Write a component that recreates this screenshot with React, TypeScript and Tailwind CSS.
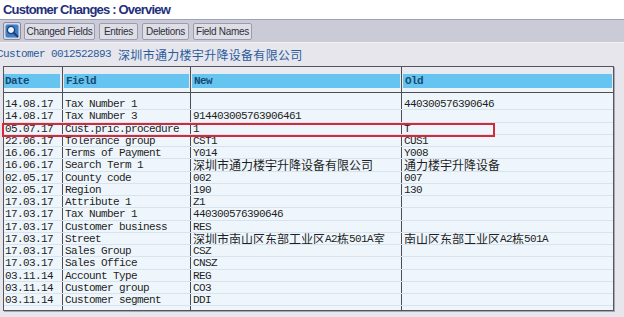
const rows: [string, string, string, string][] = [
  ["14.08.17", "Tax Number 1", "", "440300576390646"],
  ["14.08.17", "Tax Number 3", "914403005763906461", ""],
  ["05.07.17", "Cust.pric.procedure", "1", "T"],
  ["22.06.17", "Tolerance group", "CST1", "CUS1"],
  ["16.06.17", "Terms of Payment", "Y014", "Y008"],
  ["16.06.17", "Search Term 1", "深圳市通力楼宇升降设备有限公司", "通力楼宇升降设备"],
  ["02.05.17", "County code", "002", "007"],
  ["02.05.17", "Region", "190", "130"],
  ["17.03.17", "Attribute 1", "Z1", ""],
  ["17.03.17", "Tax Number 1", "440300576390646", ""],
  ["17.03.17", "Customer business", "RES", ""],
  ["17.03.17", "Street", "深圳市南山区东部工业区A2栋501A室", "南山区东部工业区A2栋501A"],
  ["17.03.17", "Sales Group", "CSZ", ""],
  ["17.03.17", "Sales Office", "CNSZ", ""],
  ["03.11.14", "Account Type", "REG", ""],
  ["03.11.14", "Customer group", "CO3", ""],
  ["03.11.14", "Customer segment", "DDI", ""],
];

// CJK runs are full width (12px), latin runs stay half width
function Mixed({ text }: { text: string }) {
  const parts = text.split(/([\u3400-\u9fff]+)/);
  return (
    <>
      {parts.map((p, i) =>
        /[\u3400-\u9fff]/.test(p) ? (
          <span
            key={i}
            className="inline-block h-[12px] align-top font-['Noto_Sans_CJK_SC',sans-serif] text-[12px] leading-[12px] tracking-normal"
          >
            {p}
          </span>
        ) : (
          <span key={i} className="whitespace-pre">{p}</span>
        )
      )}
    </>
  );
}

function Cells({ className, children }: { className?: string; children?: React.ReactNode[] }) {
  const kids = children ?? [null, null, null, null];
  return (
    <div className={`grid grid-cols-[59px_128px_211px_1fr] ${className ?? ""}`}>
      {kids.map((c, i) => (
        <div key={i} className={`h-full overflow-hidden whitespace-nowrap ${i < 3 ? "border-r border-[#4d4d55]" : ""}`}>
          {c}
        </div>
      ))}
    </div>
  );
}

function ToolButton({ label, w }: { label: string; w: string }) {
  return (
    <div
      className={`flex h-[17px] ${w} items-center justify-center rounded-[2px] border border-[#9c9cae] bg-[#dedee6] font-['Liberation_Sans',sans-serif] text-[10px] tracking-[-0.3px] text-[#30303c]`}
    >
      {label}
    </div>
  );
}

export default function App() {
  return (
    <div className="h-[317px] w-[624px] overflow-hidden bg-[#e6e6ec]">
      <div className="flex h-[19px] items-center bg-white pl-[3px] font-['Liberation_Sans',sans-serif] text-[13px] font-bold tracking-[-0.8px] text-[#232f7c]">
        Customer Changes : Overview
      </div>

      <div className="flex h-[24px] items-center gap-[4px] border-t border-b border-t-[#9aa3bb] border-b-[#f3f3f7] bg-[#cbcbd8] pl-[3px]">
        <div className="mr-[-1px] flex h-[18px] w-[18px] items-center justify-center rounded-[2px] border border-[#8a8aa0] bg-[#d8d8e2]">
          <svg width="14" height="14" viewBox="0 0 14 14">
            <rect x="0.5" y="0.5" width="13" height="13" rx="2" fill="#3f7fc8" />
            <circle cx="6" cy="6" r="3.6" fill="#e8f2ff" stroke="#1a3e78" strokeWidth="1.3" />
            <path d="M8.6 8.6 L12.5 12.5" stroke="#1a3e78" strokeWidth="2" strokeLinecap="round" />
          </svg>
        </div>
        <ToolButton label="Changed Fields" w="w-[71px]" />
        <ToolButton label="Entries" w="w-[39px]" />
        <ToolButton label="Deletions" w="w-[47px]" />
        <ToolButton label="Field Names" w="w-[59px]" />
      </div>

      <div className="-ml-[3px] flex h-[23px] items-center whitespace-pre font-['Liberation_Mono',monospace] text-[11px] tracking-[-0.6px] text-[#2a5c9c]">
        <span>Customer 0012522893 </span>
        <span className="ml-[1px] font-['Noto_Sans_CJK_SC',sans-serif] text-[12px] tracking-[0.3px]">
          深圳市通力楼宇升降设备有限公司
        </span>
      </div>

      <div className="ml-[3px] w-[611px] border border-[#55555d] font-['Liberation_Mono',monospace] text-[11px] tracking-[-0.6px] text-[#1e1e24] shadow-[1px_1px_0_#a8a8b4]">
        <Cells className="h-[7px] bg-[#e9eaf0]" />
        <Cells className="h-[14px] bg-[#e9eaf0]">
          {["Date", "Field", "New", "Old"].map((h, i) => (
            <div
              key={h}
              className={`flex h-full items-center bg-[#66c5f0] font-bold text-[#174a72] ${i === 0 ? "mr-[2px] pl-[1px]" : "mx-[1px] pl-[2px]"}`}
            >
              {h}
            </div>
          ))}
        </Cells>
        <Cells className="h-[4px] bg-[#eef3f8]" />
        <div className="h-[1px] bg-[#4d4d55]" />
        <Cells className="h-[5px] bg-[#eef6fc]" />
        {rows.map((r, idx) => (
          <div key={idx} className={`relative ${idx === 2 ? "z-10" : ""}`}>
            <Cells className="h-[12.25px] border-b border-[#d6e4ef] bg-[#eef6fc] leading-[12px]">
              {r.map((c, i) => (
                <div key={i} className={i === 0 ? "pl-[1px]" : "pl-[2px]"}>
                  <Mixed text={c} />
                </div>
              ))}
            </Cells>
            {idx === 2 && (
              <div className="absolute -left-[2px] top-0 h-[14px] w-[493px] border-2 border-[#d6283a]" />
            )}
          </div>
        ))}
        <Cells className="h-[4px] bg-[#eef6fc]" />
      </div>
    </div>
  );
}
